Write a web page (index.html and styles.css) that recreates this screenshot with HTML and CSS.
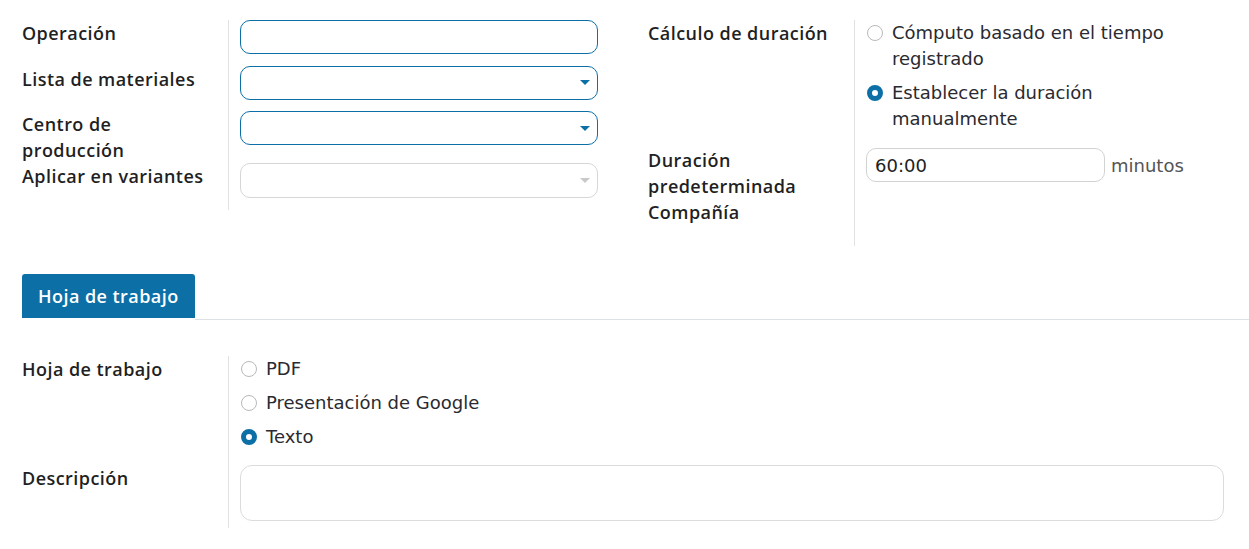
FILE: index.html
```html
<!DOCTYPE html>
<html lang="es">
<head>
<meta charset="utf-8">
<title>Operación</title>
<link rel="stylesheet" href="styles.css">
</head>
<body>
<div class="sheet">
  <div class="top">
    <div class="group">
      <div class="label">Operación</div>
      <div class="value"><div class="input focus"></div></div>

      <div class="label">Lista de materiales</div>
      <div class="value"><div class="input focus select"><span class="caret"></span></div></div>

      <div class="label">Centro de producción</div>
      <div class="value"><div class="input focus select"><span class="caret"></span></div></div>

      <div class="label">Aplicar en variantes</div>
      <div class="value"><div class="input disabled select"><span class="caret"></span></div></div>
    </div>

    <div class="group">
      <div class="label">Cálculo de duración</div>
      <div class="value">
        <div class="radios">
          <div class="radio"><span class="dot"></span><span class="rtext narrow">Cómputo basado en el tiempo registrado</span></div>
          <div class="radio"><span class="dot on"></span><span class="rtext narrow">Establecer la duración manualmente</span></div>
        </div>
      </div>

      <div class="label">Duración predeterminada</div>
      <div class="value">
        <div class="inline">
          <div class="input plain duration">60:00</div>
          <span class="unit">minutos</span>
        </div>
      </div>

      <div class="label">Compañía</div>
      <div class="value"><div class="empty"></div></div>
    </div>
  </div>

  <div class="tabs"><div class="tab">Hoja de trabajo</div></div>

  <div class="group wide">
    <div class="label">Hoja de trabajo</div>
    <div class="value">
      <div class="radios">
        <div class="radio"><span class="dot"></span><span class="rtext">PDF</span></div>
        <div class="radio"><span class="dot"></span><span class="rtext">Presentación de Google</span></div>
        <div class="radio"><span class="dot on"></span><span class="rtext">Texto</span></div>
      </div>
    </div>

    <div class="label">Descripción</div>
    <div class="value"><div class="textarea"></div></div>
  </div>
</div>
</body>
</html>
```

FILE: styles.css
```css
* { box-sizing: border-box; }

body {
  margin: 0;
  background: #fff;
  font-family: "DejaVu Sans", "Noto Sans", sans-serif;
  font-size: 18px;
  color: #222;
}

.sheet {
  padding: 20px 0 0 22px;
}

.top {
  display: grid;
  grid-template-columns: 576px 576px;
  column-gap: 50px;
  align-items: start;
}

.group {
  display: grid;
  grid-template-columns: 206px 1fr;
}

.group.wide {
  width: 1202px;
  margin-top: 36px;
}

.label {
  font-family: "Open Sans", "Noto Sans", sans-serif;
  font-weight: 600;
  font-size: 18px;
  letter-spacing: 0.45px;
  line-height: 26px;
  color: #1f1f24;
  padding-right: 18px;
}

.value {
  border-left: 1px solid #e2e2e2;
  padding-left: 11px;
}

.input {
  height: 34px;
  border: 1px solid #d6d6d6;
  border-radius: 10px;
  margin-bottom: 11.5px;
  display: flex;
  align-items: center;
}

.input.focus {
  border-color: #0c6fa6;
}

.input.disabled {
  height: 35px;
}

.input.select {
  justify-content: flex-end;
  padding-right: 7px;
}

.caret {
  width: 0;
  height: 0;
  border-left: 5px solid transparent;
  border-right: 5px solid transparent;
  border-top: 5px solid #0c6fa6;
}

.input.disabled .caret {
  border-top-color: #c9c9c9;
}

.radios {
  display: flex;
  flex-direction: column;
  gap: 8px;
  padding-bottom: 15px;
}

.radio {
  display: flex;
  align-items: flex-start;
}

.dot {
  flex: none;
  width: 16px;
  height: 16px;
  border: 1px solid #b9b9b9;
  border-radius: 50%;
  margin: 5px 9px 0 1px;
  background: #fff;
}

.dot.on {
  border: 5px solid #0c6fa6;
  background: #fff;
}

.rtext {
  line-height: 26px;
  color: #2a2a30;
}

.rtext.narrow {
  max-width: 320px;
}

.inline {
  display: flex;
  align-items: center;
  gap: 6px;
  margin-top: 1px;
  margin-bottom: 11px;
}

.input.plain {
  margin-bottom: 0;
  padding-left: 8px;
  color: #222;
}

.duration {
  width: 239px;
  border-color: #d2d2d2;
}

.unit {
  color: #555;
}

.empty {
  height: 47px;
}

.tabs {
  margin-top: 28px;
  border-bottom: 1px solid #dee2e6;
  display: flex;
}

.tab {
  background: #0c6fa6;
  color: #fff;
  font-family: "Open Sans", "Noto Sans", sans-serif;
  font-weight: 600;
  font-size: 18px;
  letter-spacing: 0.45px;
  height: 46px;
  padding: 0 16px;
  line-height: 44px;
  border-radius: 3px 3px 0 0;
  border-bottom: 2px solid #fff;
  margin-bottom: -1px;
  background-clip: padding-box;
}

.textarea {
  height: 56px;
  border: 1px solid #dcdcdc;
  border-radius: 12px;
  margin-bottom: 7px;
}
```
